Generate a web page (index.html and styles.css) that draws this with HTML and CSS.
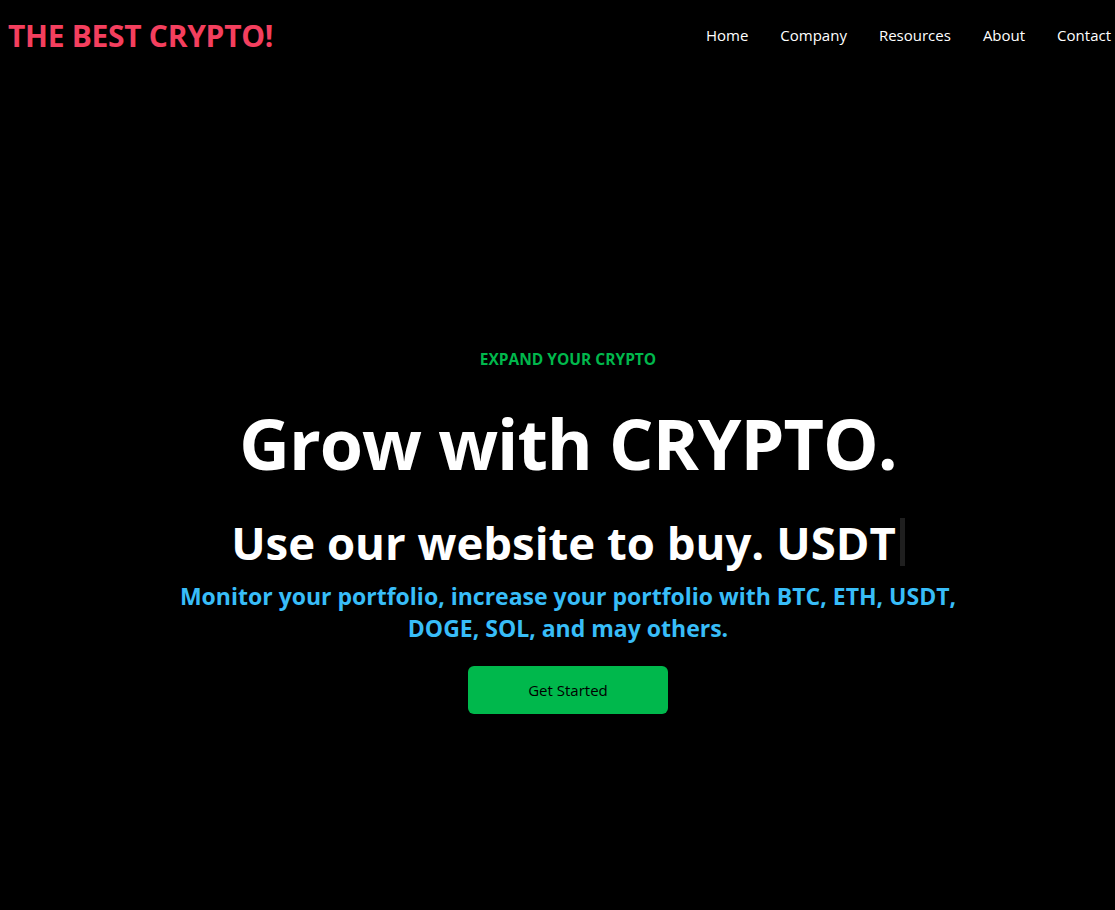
FILE: index.html
```html
<!DOCTYPE html>
<html lang="en">
<head>
<meta charset="utf-8">
<title>The Best Crypto</title>
<link rel="stylesheet" href="styles.css">
</head>
<body>
<div class="page">
  <header class="navbar">
    <h1 class="logo">THE BEST CRYPTO!</h1>
    <ul class="nav-links">
      <li>Home</li>
      <li>Company</li>
      <li>Resources</li>
      <li>About</li>
      <li>Contact</li>
    </ul>
  </header>
  <main class="hero">
    <p class="eyebrow">EXPAND YOUR CRYPTO</p>
    <h2 class="title">Grow with CRYPTO.</h2>
    <div class="typed-row">
      <span class="typed-static">Use our website to buy.</span>
      <span class="typed-word">USDT</span><span class="cursor"></span>
    </div>
    <p class="lead">Monitor your portfolio, increase your portfolio with BTC, ETH, USDT, DOGE, SOL, and may others.</p>
    <button class="cta">Get Started</button>
  </main>
</div>
</body>
</html>
```
FILE: styles.css
```css
* { box-sizing: border-box; }
html, body { margin: 0; padding: 0; }
body {
  background: #000;
  color: #fff;
  font-family: "Open Sans", "Noto Sans", sans-serif;
  height: 910px;
  overflow: hidden;
}
.page {
  width: 1136px;
}
.navbar {
  display: flex;
  justify-content: space-between;
  align-items: center;
  height: 70px;
  padding: 0 25px 0 8px;
}
.logo {
  margin: 0;
  font-size: 30px;
  font-weight: 700;
  color: #f43f5e;
  letter-spacing: -0.3px;
}
.nav-links {
  display: flex;
  gap: 32px;
  list-style: none;
  margin: 0;
  padding: 0;
  font-size: 15px;
}
.hero {
  max-width: 800px;
  margin: 0 auto;
  padding-top: 277px;
  text-align: center;
  display: flex;
  flex-direction: column;
  align-items: center;
}
.eyebrow {
  margin: 0;
  font-size: 15.5px;
  line-height: 24px;
  font-weight: 700;
  color: #00b84c;
}
.title {
  margin: 32px 0 0;
  font-size: 70px;
  line-height: 80px;
  font-weight: 700;
  letter-spacing: -1px;
}
.typed-row {
  margin-top: 31px;
  display: flex;
  align-items: center;
  gap: 12px;
  font-size: 45.5px;
  line-height: 56px;
  font-weight: 700;
}
.cursor {
  display: inline-block;
  width: 5px;
  height: 48px;
  background: #1f1f1f;
  margin-left: -8px;
}
.lead {
  margin: 10px 0 0;
  font-size: 23px;
  line-height: 32px;
  font-weight: 700;
  color: #38bdf8;
}
.cta {
  margin-top: 22px;
  width: 200px;
  height: 48px;
  border: none;
  border-radius: 6px;
  background: #00b84c;
  color: #000;
  font-family: inherit;
  font-size: 15px;
  font-weight: 500;
}
```
